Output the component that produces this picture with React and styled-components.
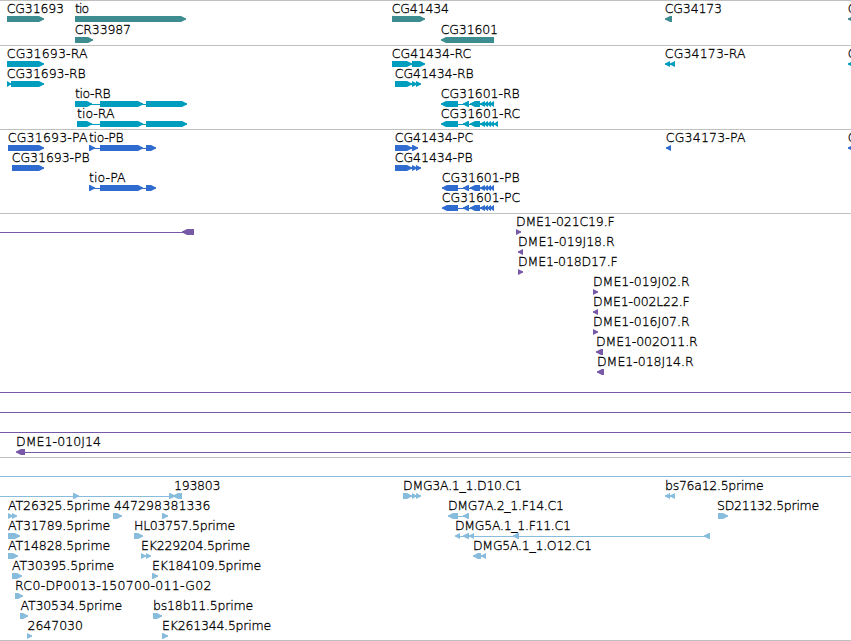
import styled, { createGlobalStyle } from 'styled-components';

const FONT = '200 12.5px "DejaVu Sans", "DejaVu Sans Light"';

const VIEW = 851;

// exons are [start, end] pairs, dir is the strand the arrows point to
const f = (name, x, end, dir, exons, line) => ({ name, x, end, dir, exons, line });

const TRACKS = [
  {
    color: '#3d8c90',
    rowHeight: 21,
    rows: [
      [
        f('CG31693', 7.8, 63, 1, [[7, 44]]),
        f('tio', 75, 88.5, 1, [[75, 186]]),
        f('CG41434', 392.8, 448, 1, [[392, 425]]),
        f('CG34173', 665.8, 721, -1, [[665, 672]]),
        f('C', 848.8, 856, -1, [[848, 858]]),
      ],
      [
        f('CR33987', 75.8, 130, 1, [[75, 93]]),
        f('CG31601', 441.8, 497, -1, [[441, 494]]),
      ],
    ],
  },
  {
    color: '#009dbe',
    rows: [
      [
        f('CG31693-RA', 7.8, 88, 1, [[7, 44]]),
        f('CG41434-RC', 392.8, 471.5, 1, [[392, 412], [412, 425]]),
        f('CG34173-RA', 665.8, 746, -1, [[665, 670], [670, 675]]),
        f('C', 848.8, 856, -1, [[848, 858]]),
      ],
      [
        f('CG31693-RB', 7.8, 85.5, 1, [[7, 11], [11, 44]]),
        f('CG41434-RB', 395.8, 473.5, 1, [[395, 412], [412, 417], [416, 421]]),
      ],
      [
        f('tio-RB', 75, 110.5, 1, [[75, 92], [100, 143], [146, 187]]),
        f('CG31601-RB', 441.8, 519.5, -1, [[441, 458], [463, 469], [470, 480], [480, 485], [484, 488], [487, 491], [490, 494]]),
      ],
      [
        f('tio-RA', 77, 115, 1, [[77, 92], [100, 143], [146, 187]]),
        f('CG31601-RC', 441.8, 520.5, -1, [[441, 458], [463, 469], [470, 480], [480, 485], [484, 488], [487, 491], [490, 494], [494, 498]]),
      ],
    ],
  },
  {
    color: '#306ccf',
    rows: [
      [
        f('CG31693-PA', 8.8, 88, 1, [[8, 44]]),
        f('tio-PB', 89, 123.5, 1, [[89, 95], [100, 143], [146, 156]]),
        f('CG41434-PC', 395.8, 473.5, 1, [[395, 412], [412, 418]]),
        f('CG34173-PA', 666.8, 746, -1, [[666, 671]]),
        f('C', 848.8, 856, -1, [[848, 858]]),
      ],
      [
        f('CG31693-PB', 12.8, 89.5, 1, [[12, 44]]),
        f('CG41434-PB', 395.8, 472.5, 1, [[395, 412], [412, 417], [416, 421]]),
      ],
      [
        f('tio-PA', 89, 126, 1, [[89, 95], [100, 143], [146, 156]]),
        f('CG31601-PB', 442.8, 519.5, -1, [[442, 458], [463, 469], [470, 480], [480, 485], [484, 488], [487, 491], [490, 494]]),
      ],
      [
        f('CG31601-PC', 442.8, 520.5, -1, [[442, 458], [463, 469], [470, 480], [480, 485], [484, 488], [487, 491], [490, 494]]),
      ],
    ],
  },
  {
    color: '#7759a8',
    rows: [
      [
        f('', 0, 0, -1, [[182, 194]], [0, 186]),
        f('DME1-021C19.F', 517, 614.5, 1, [[516, 521]]),
      ],
      [f('DME1-019J18.R', 519, 615, -1, [[518, 523]])],
      [f('DME1-018D17.F', 519, 617.5, 1, [[518, 523]])],
      [f('DME1-019J02.R', 594, 690, 1, [[593, 598]])],
      [f('DME1-002L22.F', 594, 689.5, -1, [[593, 598]])],
      [f('DME1-016J07.R', 594, 690, 1, [[593, 598]])],
      [f('DME1-002O11.R', 597, 698, -1, [[596, 603]])],
      [f('DME1-018J14.R', 598, 694, -1, [[597, 604]])],
      [f('', 0, 0, 1, [], [0, VIEW])],
      [f('', 0, 0, 1, [], [0, VIEW])],
      [f('', 0, 0, 1, [], [0, VIEW])],
      [f('DME1-010J14', 17, 100, -1, [[16, 25]], [20, VIEW])],
    ],
  },
  {
    color: '#87bcdd',
    rows: [
      [f('', 0, 0, 1, [], [0, VIEW])],
      [
        f('', 0, 0, 1, [[73, 79], [169, 175]], [0, 174]),
        f('193803', 175, 219.5, -1, [[173, 182]]),
        f('DMG3A.1_1.D10.C1', 404, 521, 1, [[403, 412], [412, 416.5], [416, 421]]),
        f('bs76a12.5prime', 666, 763, -1, [[665, 670], [670, 675]]),
      ],
      [
        f('AT26325.5prime', 8, 109.5, 1, [[8, 13], [12, 17]]),
        f('447298', 114, 161, 1, [[113, 122]]),
        f('381336', 162.5, 209.5, 1, [[162, 168]]),
        f('DMG7A.2_1.F14.C1', 449, 563, -1, [[448, 458], [463, 469]]),
        f('SD21132.5prime', 718, 818.5, 1, [[718, 728]]),
      ],
      [
        f('AT31789.5prime', 8, 109.5, 1, [[8, 20]]),
        f('HL03757.5prime', 135, 234.5, 1, [[134, 143]]),
        f('DMG5A.1_1.F11.C1', 456, 570, -1, [[455, 460], [463, 469], [469, 474], [513, 519], [704, 710]]),
      ],
      [
        f('AT14828.5prime', 8, 109.5, 1, [[8, 18]]),
        f('EK229204.5prime', 142, 249.5, 1, [[141, 146], [146, 151]]),
        f('DMG5A.1_1.O12.C1', 474, 591, -1, [[473, 481], [481, 486]]),
      ],
      [
        f('AT30395.5prime', 12, 113.5, 1, [[12, 22]]),
        f('EK184109.5prime', 153, 260.5, 1, [[152, 158]]),
      ],
      [f('RC0-DP0013-150700-011-G02', 16, 210.5, 1, [[15, 23]])],
      [
        f('AT30534.5prime', 20.5, 121.5, 1, [[20, 28]]),
        f('bs18b11.5prime', 154, 252.5, 1, [[153, 162]]),
      ],
      [
        f('2647030', 27.5, 82, 1, [[27, 32]]),
        f('EK261344.5prime', 163, 270.5, 1, [[162, 168]]),
      ],
    ],
  },
];

const ctx = document.createElement('canvas').getContext('2d');

// spread a name evenly over its span
const fit = (name, x, end) => {
  ctx.font = FONT;
  const m = ctx.measureText(name);
  const ink = m.actualBoundingBoxRight + m.actualBoundingBoxLeft;
  return {
    left: x + m.actualBoundingBoxLeft,
    letterSpacing: name.length > 1 ? (end - x - ink) / (name.length - 1) : 0,
  };
};

const arrow = ([a, b], dir) => {
  const tip = Math.min(5, b - a);
  return dir > 0
    ? `${a},0 ${b - tip},0 ${b - tip + 1},0.4 ${b - 1},2 ${b},2.2 ${b},3.8 ${b - 1},4 ${b - tip + 1},5.6 ${b - tip},6 ${a},6`
    : `${b},0 ${a + tip},0 ${a + tip - 1},0.4 ${a + 1},2 ${a},2.2 ${a},3.8 ${a + 1},4 ${a + tip - 1},5.6 ${a + tip},6 ${b},6`;
};

const Feature = ({ name, x, end, dir, exons, line }) => {
  const [from, to] = line || [exons[0][0], exons[exons.length - 1][1]];
  const intron = line || exons.length > 1;
  return (
    <>
      {name && <Label style={fit(name, x, end)}>{name}</Label>}
      <Glyph viewBox={`0 0 ${VIEW} 6`}>
        {intron && <rect x={from + (line ? 0 : 2)} y="3" width={to - from - (line ? 0 : 4)} height="1" />}
        {exons.map((exon) => (
          <polygon key={exon[0]} points={arrow(exon, dir)} />
        ))}
      </Glyph>
    </>
  );
};

const App = () => {
  return (
    <>
      <GlobalStyle />
      <Browser>
        {TRACKS.map((track) => (
          <Track key={track.color} $color={track.color}>
            {track.rows.map((row, i) => (
              <Row key={i} $height={track.rowHeight}>
                {row.map((feature, j) => (
                  <Feature key={j} {...feature} />
                ))}
              </Row>
            ))}
          </Track>
        ))}
      </Browser>
    </>
  );
};

const GlobalStyle = createGlobalStyle`
  body {
    margin: 0;
    background: #fff;
    overflow: hidden;
  }
`;

const Browser = styled.main`
  box-sizing: border-box;
  width: ${VIEW}px;
  height: 641px;
  overflow: hidden;

  display: flex;
  flex-direction: column;
`;

const Track = styled.section`
  display: flex;
  flex-direction: column;

  border-top: 1px solid #c0c0c0;
  padding-bottom: 3px;
  color: ${(props) => props.$color};

  &:first-child,
  &:last-child {
    padding-bottom: 2px;
  }

  &:last-child {
    border-bottom: 1px solid #c0c0c0;
  }
`;

const Row = styled.div`
  position: relative;
  height: ${(props) => props.$height || 20}px;
`;

const Label = styled.span`
  position: absolute;
  top: 1px;
  z-index: 1;

  color: #000;
  font: ${FONT}, sans-serif;
  line-height: 14px;
  white-space: nowrap;
  -webkit-text-stroke: 0.3px #000;
`;

const Glyph = styled.svg`
  position: absolute;
  top: 15px;
  left: 0;

  display: block;
  width: ${VIEW}px;
  height: 6px;
  fill: currentColor;
`;

export default App;
